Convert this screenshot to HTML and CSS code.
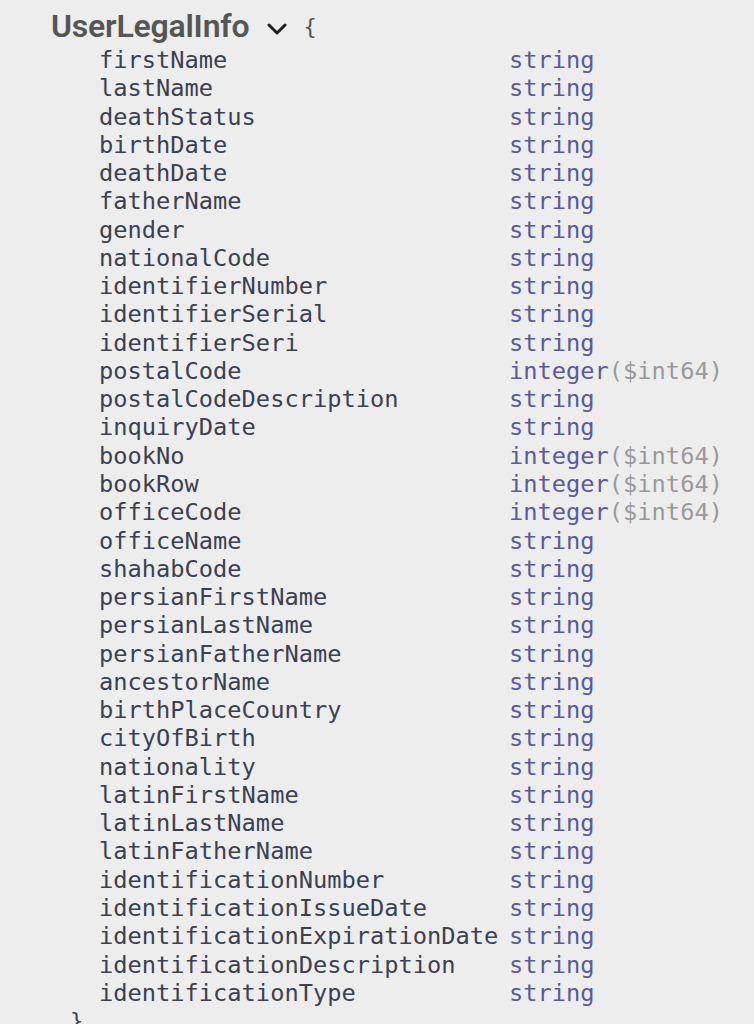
FILE: index.html
```html
<!DOCTYPE html>
<html>
<head>
<meta charset="utf-8">
<link rel="stylesheet" href="styles.css">
</head>
<body>
<div class="model">
  <div class="model-head">
    <span class="model-title">UserLegalInfo</span>
    <svg class="chev" width="20" height="12" viewBox="0 0 20 12"><path d="M2 2 L10 10 L18 2" fill="none" stroke="#1f1f1f" stroke-width="3" stroke-linecap="round" stroke-linejoin="round"/></svg>
    <span class="brace">{</span>
  </div>
  <div class="props">
    <span class="pn">firstName</span><span class="pt">string</span>
    <span class="pn">lastName</span><span class="pt">string</span>
    <span class="pn">deathStatus</span><span class="pt">string</span>
    <span class="pn">birthDate</span><span class="pt">string</span>
    <span class="pn">deathDate</span><span class="pt">string</span>
    <span class="pn">fatherName</span><span class="pt">string</span>
    <span class="pn">gender</span><span class="pt">string</span>
    <span class="pn">nationalCode</span><span class="pt">string</span>
    <span class="pn">identifierNumber</span><span class="pt">string</span>
    <span class="pn">identifierSerial</span><span class="pt">string</span>
    <span class="pn">identifierSeri</span><span class="pt">string</span>
    <span class="pn">postalCode</span><span class="pt">integer<span class="pf">($int64)</span></span>
    <span class="pn">postalCodeDescription</span><span class="pt">string</span>
    <span class="pn">inquiryDate</span><span class="pt">string</span>
    <span class="pn">bookNo</span><span class="pt">integer<span class="pf">($int64)</span></span>
    <span class="pn">bookRow</span><span class="pt">integer<span class="pf">($int64)</span></span>
    <span class="pn">officeCode</span><span class="pt">integer<span class="pf">($int64)</span></span>
    <span class="pn">officeName</span><span class="pt">string</span>
    <span class="pn">shahabCode</span><span class="pt">string</span>
    <span class="pn">persianFirstName</span><span class="pt">string</span>
    <span class="pn">persianLastName</span><span class="pt">string</span>
    <span class="pn">persianFatherName</span><span class="pt">string</span>
    <span class="pn">ancestorName</span><span class="pt">string</span>
    <span class="pn">birthPlaceCountry</span><span class="pt">string</span>
    <span class="pn">cityOfBirth</span><span class="pt">string</span>
    <span class="pn">nationality</span><span class="pt">string</span>
    <span class="pn">latinFirstName</span><span class="pt">string</span>
    <span class="pn">latinLastName</span><span class="pt">string</span>
    <span class="pn">latinFatherName</span><span class="pt">string</span>
    <span class="pn">identificationNumber</span><span class="pt">string</span>
    <span class="pn">identificationIssueDate</span><span class="pt">string</span>
    <span class="pn">identificationExpirationDate</span><span class="pt">string</span>
    <span class="pn">identificationDescription</span><span class="pt">string</span>
    <span class="pn">identificationType</span><span class="pt">string</span>
  </div>
  <div class="close">}</div>
</div>
</body>
</html>
```

FILE: styles.css
```css
html, body {
  margin: 0;
  padding: 0;
  background: #ededed;
  height: 1024px;
  overflow: hidden;
}

.model {
  padding-left: 51px;
}

.model-head {
  display: flex;
  align-items: center;
  height: 46px;
  padding-top: 6px;
  box-sizing: border-box;
}

.model-title {
  font-family: Roboto, "Liberation Sans", sans-serif;
  font-weight: 600;
  font-size: 32px;
  color: #555555;
  letter-spacing: -0.2px;
}

.chev {
  margin-left: 18px;
  margin-top: 6px;
}

.brace {
  font-family: "DejaVu Sans Mono", monospace;
  font-size: 22px;
  color: #555555;
  margin-left: 16px;
}

.props {
  display: grid;
  grid-template-columns: 410px auto;
  padding-left: 48px;
  font-family: "DejaVu Sans Mono", monospace;
  font-size: 23.7px;
  line-height: 28.27px;
}

.pn {
  color: #3b4151;
  white-space: nowrap;
}

.pt {
  color: #5a5a9e;
  white-space: nowrap;
}

.pf {
  color: #9a9a9a;
}

.close {
  font-family: "DejaVu Sans Mono", monospace;
  font-size: 22px;
  line-height: 28px;
  color: #3b4151;
  padding-left: 19px;
}
```
